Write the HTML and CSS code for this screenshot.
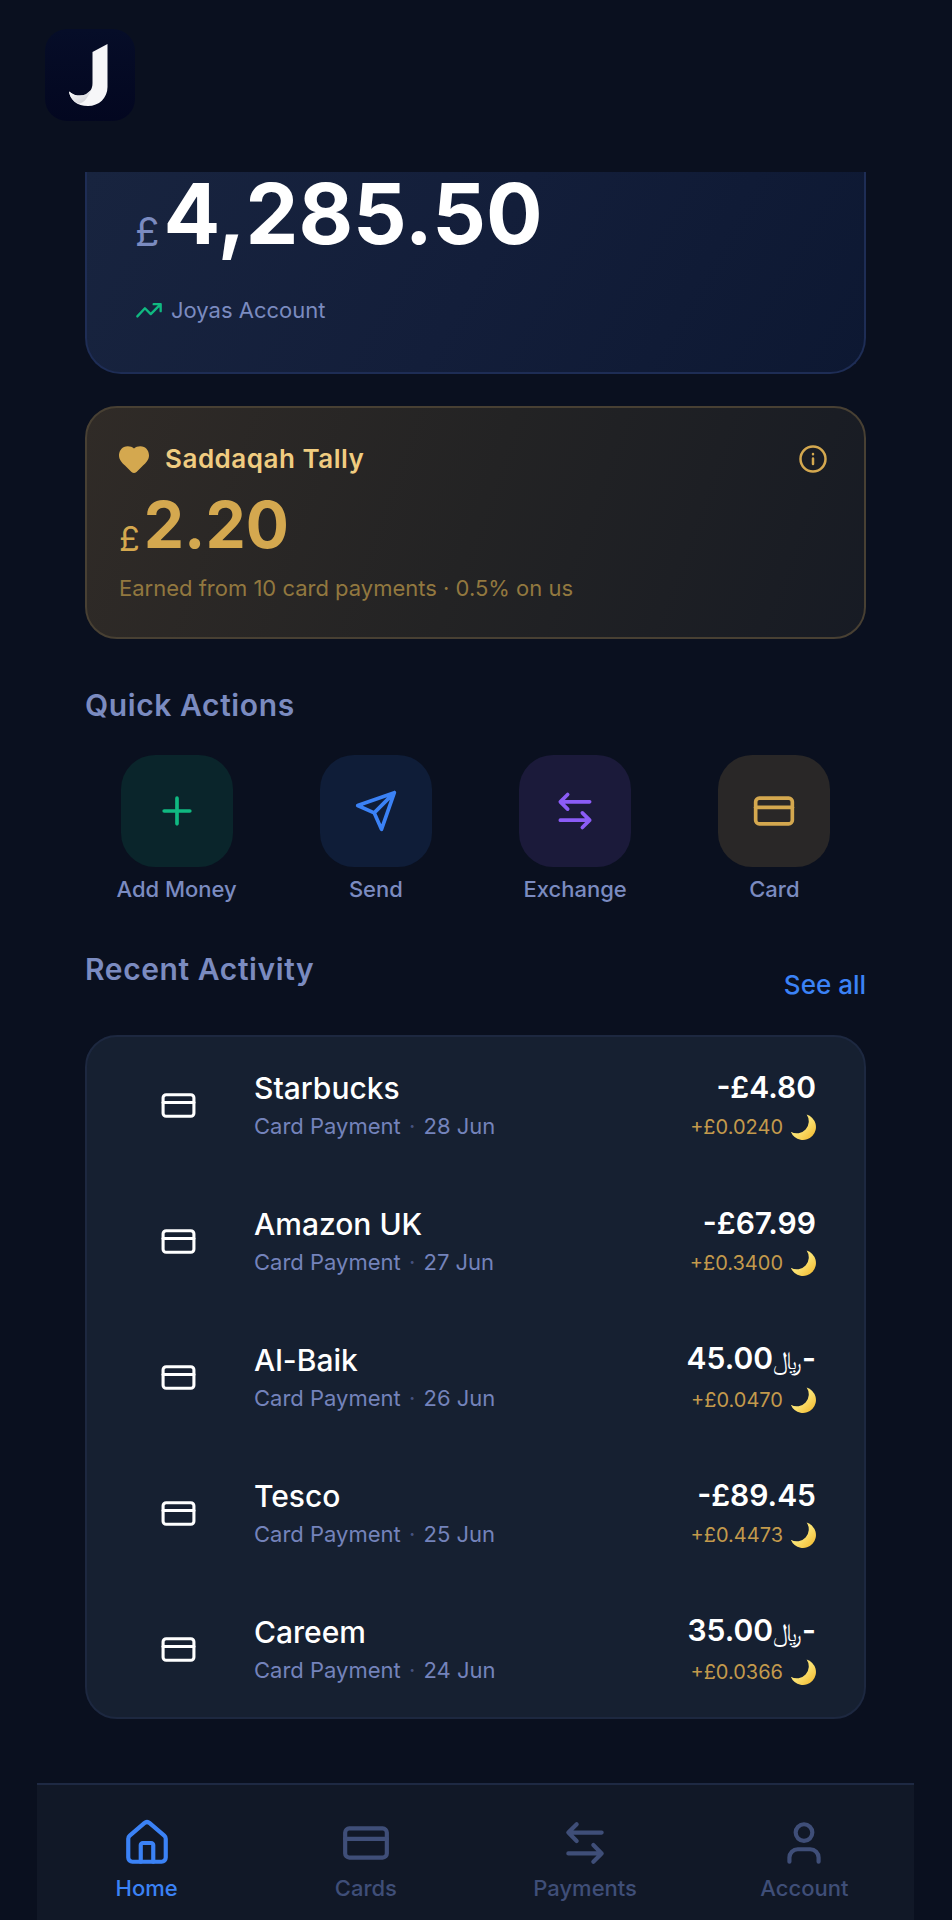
FILE: index.html
```html
<!DOCTYPE html>
<html lang="en">
<head>
  <meta charset="UTF-8" />
  <meta name="viewport" content="width=device-width, initial-scale=1" />
  <title>Joyas - Home</title>
  <link rel="stylesheet" href="styles.css">
</head>
<body>

  <!-- Shared icons -->
  <svg class="sprite" aria-hidden="true">
    <linearGradient id="moon-fill" x1="0" y1="0" x2="1" y2="1">
      <stop offset=".5" stop-color="#fbe272"/><stop offset=".9" stop-color="#f3bd35"/>
    </linearGradient>
    <symbol id="i-card" viewBox="0 0 24 24"><rect x="2" y="5" width="20" height="14" rx="2"/><path d="M2 10h20"/></symbol>
    <symbol id="i-swap" viewBox="0 0 24 24"><path d="M8 3 4 7l4 4M4 7h16M16 21l4-4-4-4M20 17H4"/></symbol>
    <symbol id="i-moon" viewBox="0 0 25 25"><path d="M16 .5A12.500 12.500 0 1 1 .8 17A11.500 11.500 0 0 0 16 .5Z" fill="url(#moon-fill)"/></symbol>
  </svg>

  <header class="top">
    <svg class="logo" viewBox="0 0 90 92" role="img" aria-label="Joyas">
      <defs>
        <linearGradient id="logo-bg" x1="0" y1="0" x2="0" y2="1">
          <stop offset="0" stop-color="#060d28"/><stop offset="1" stop-color="#030720"/>
        </linearGradient>
        <linearGradient id="fold" x1="0" y1="0" x2="1" y2="1">
          <stop offset="0" stop-color="#fff"/><stop offset="1" stop-color="#c9cad0"/>
        </linearGradient>
      </defs>
      <rect width="90" height="92" rx="22" fill="url(#logo-bg)"/>
      <path d="M47.500 23 62.500 15V58C62.500 69 54 77 43 77C32 77 25 71 24 62.500C29 67 36 67.500 40.500 65.500C45 63.500 47.500 60 47.500 54Z" fill="#f6f6f8"/>
      <path d="M24 62.500C29 67 36 67.500 40.500 65.500L46 61C43 68 40 73.500 34 74.500C28 72.500 25 68 24 62.500Z" fill="url(#fold)"/>
    </svg>
  </header>

  <main class="content">
    <section class="card balance">
      <div class="amount"><span class="cur">£</span><strong>4,285.50</strong></div>
      <div class="account">
        <svg class="icon trend" viewBox="0 0 24 24"><path d="m2 17.500 6.500-7 5 5L22 7M16 7h6v6"/></svg>
        <span>Joyas Account</span>
      </div>
    </section>

    <section class="card tally">
      <div class="tally-head">
        <svg class="heart" viewBox="0 0 30 27"><path d="M15 2.500C12.500 0 8-.500 5 1C1 3 0 7 0 9.500C0 13.500 3 17 6 19.500L12.500 26Q15 28 17.500 26L24 19.500C27 17 30 13.500 30 9.500C30 7 29 3 25 1C22-.500 17.500 0 15 2.500Z"/></svg>
        <h2>Saddaqah Tally</h2>
        <button class="info" aria-label="About the tally">
          <svg class="icon" viewBox="0 0 24 24"><circle cx="12" cy="12" r="10"/><path d="M12 11.500V16M12 7.900v.2"/></svg>
        </button>
      </div>
      <div class="amount"><span class="cur">£</span><strong>2.20</strong></div>
      <p>Earned from 10 card payments · 0.5% on us</p>
    </section>

    <h2 class="section-title">Quick Actions</h2>
    <div class="actions">
      <button class="action green">
        <span class="tile"><svg class="icon" viewBox="0 0 24 24"><path d="M5 12h14M12 5v14"/></svg></span>
        Add Money
      </button>
      <button class="action blue">
        <span class="tile"><svg class="icon" viewBox="0 0 24 24"><path d="M22 2 11 13M22 2l-7 20-4-9-9-4Z"/></svg></span>
        Send
      </button>
      <button class="action purple">
        <span class="tile"><svg class="icon"><use href="#i-swap"/></svg></span>
        Exchange
      </button>
      <button class="action gold">
        <span class="tile"><svg class="icon"><use href="#i-card"/></svg></span>
        Card
      </button>
    </div>

    <div class="activity-head">
      <h2 class="section-title">Recent Activity</h2>
      <a href="#all">See all</a>
    </div>
    <ul class="card activity">
      <li>
        <svg class="icon"><use href="#i-card"/></svg>
        <div class="who"><b>Starbucks</b><span>Card Payment <i>·</i> 28 Jun</span></div>
        <div class="sum"><b>-£4.80</b><span>+£0.0240 <svg class="moon"><use href="#i-moon"/></svg></span></div>
      </li>
      <li>
        <svg class="icon"><use href="#i-card"/></svg>
        <div class="who"><b>Amazon UK</b><span>Card Payment <i>·</i> 27 Jun</span></div>
        <div class="sum"><b>-£67.99</b><span>+£0.3400 <svg class="moon"><use href="#i-moon"/></svg></span></div>
      </li>
      <li>
        <svg class="icon"><use href="#i-card"/></svg>
        <div class="who"><b>Al-Baik</b><span>Card Payment <i>·</i> 26 Jun</span></div>
        <div class="sum"><b dir="rtl">-<span class="riyal">﷼</span>45.00</b><span>+£0.0470 <svg class="moon"><use href="#i-moon"/></svg></span></div>
      </li>
      <li>
        <svg class="icon"><use href="#i-card"/></svg>
        <div class="who"><b>Tesco</b><span>Card Payment <i>·</i> 25 Jun</span></div>
        <div class="sum"><b>-£89.45</b><span>+£0.4473 <svg class="moon"><use href="#i-moon"/></svg></span></div>
      </li>
      <li>
        <svg class="icon"><use href="#i-card"/></svg>
        <div class="who"><b>Careem</b><span>Card Payment <i>·</i> 24 Jun</span></div>
        <div class="sum"><b dir="rtl">-<span class="riyal">﷼</span>35.00</b><span>+£0.0366 <svg class="moon"><use href="#i-moon"/></svg></span></div>
      </li>
    </ul>
  </main>

  <nav class="tabs">
    <a href="#home" class="active">
      <svg class="icon" viewBox="0 0 24 24"><path d="M15 21v-8a1 1 0 0 0-1-1h-4a1 1 0 0 0-1 1v8"/><path d="M3 10a2 2 0 0 1 .709-1.528l7-5.999a2 2 0 0 1 2.582 0l7 5.999A2 2 0 0 1 21 10v9a2 2 0 0 1-2 2H5a2 2 0 0 1-2-2z"/></svg>
      Home
    </a>
    <a href="#cards">
      <svg class="icon"><use href="#i-card"/></svg>
      Cards
    </a>
    <a href="#payments">
      <svg class="icon"><use href="#i-swap"/></svg>
      Payments
    </a>
    <a href="#account">
      <svg class="icon" viewBox="0 0 24 24"><path d="M19 21v-2a4 4 0 0 0-4-4H9a4 4 0 0 0-4 4v2"/><circle cx="12" cy="7" r="4"/></svg>
      Account
    </a>
  </nav>

</body>
</html>
```

FILE: styles.css
```css
* {
  box-sizing: border-box;
}
body {
  margin: 0;
  min-height: 100vh;
  display: flex;
  flex-direction: column;
  font-family: Inter, 'DejaVu Sans', sans-serif;
  font-size: 22px;
  line-height: 28px;
  background: #0a101f;
  color: #fff;
}
h2, p, ul {
  margin: 0;
  padding: 0;
}
button {
  font: inherit;
  background: none;
  border: none;
  padding: 0;
  cursor: pointer;
}
a {
  text-decoration: none;
}
.sprite {
  position: absolute;
  width: 0;
  height: 0;
}
.icon {
  fill: none;
  stroke: currentColor;
  stroke-width: 2;
  stroke-linecap: round;
  stroke-linejoin: round;
  flex-shrink: 0;
}

/* Header */
.top {
  padding: 29px 45px 51px;
}
.logo {
  display: block;
  width: 90px;
  height: 92px;
}

.content {
  flex: 1;
  padding: 0 86px 64px 85px;
}
.card {
  border: 2px solid;
  border-radius: 32px;
}
.amount {
  display: flex;
  align-items: flex-end;
  gap: 4px;
}

/* Balance card, scrolled under the header */
.balance {
  height: 202px;
  padding: 0 48px;
  border-color: #1e2d55;
  border-top: none;
  border-radius: 0 0 36px 36px;
  background: linear-gradient(120deg, #18243f, #131e3a 50%, #0d1832);
}
.balance .cur {
  font-size: 40px;
  line-height: 48px;
  color: #7b8bc0;
}
.balance strong {
  font-size: 84px;
  line-height: 84px;
}
.account {
  display: flex;
  align-items: center;
  gap: 8px;
  margin-top: 40px;
  color: #7b8bc0;
}
.trend {
  width: 28px;
  height: 28px;
  color: #10b981;
}

/* Saddaqah */
.tally {
  margin-top: 32px;
  padding: 32px 36px 35px 32px;
  border-color: #484033;
  background: linear-gradient(110deg, #302b27, #232324 50%, #171b24);
  color: #d4a84f;
}
.tally-head {
  display: flex;
  align-items: center;
  gap: 16px;
  height: 38px;
}
.tally-head h2 {
  flex: 1;
  font-size: 26px;
  font-weight: 600;
  letter-spacing: 0.02em;
  color: #f0cc80;
}
.heart {
  width: 30px;
  height: 27px;
  fill: currentColor;
}
.info {
  display: flex;
  color: inherit;
}
.info .icon {
  width: 30px;
  height: 30px;
}
.tally .amount {
  margin-top: 6px;
}
.tally .cur {
  font-size: 34px;
  line-height: 54px;
}
.tally strong {
  font-size: 64px;
  line-height: 82px;
}
.tally p {
  margin-top: 8px;
  color: #92783f;
}

/* Quick actions */
.section-title {
  font-size: 30px;
  line-height: 36px;
  font-weight: 600;
  letter-spacing: 0.02em;
  color: #7b8bc0;
}
.content > .section-title {
  margin-top: 48px;
}
.actions {
  display: grid;
  grid-template-columns: repeat(4, 1fr);
  gap: 16px;
  margin-top: 32px;
}
.action {
  display: flex;
  flex-direction: column;
  align-items: center;
  gap: 8px;
  color: #7b8bc0;
  font-weight: 500;
}
.tile {
  display: grid;
  place-items: center;
  width: 112px;
  height: 112px;
  border-radius: 34px;
}
.tile .icon {
  width: 44px;
  height: 44px;
}
.green .tile { background: #0a252b; color: #10b981; }
.blue .tile { background: #0f1d38; color: #3b82f6; }
.purple .tile { background: #1b1a3a; color: #8b5cf6; }
.gold .tile { background: #292727; color: #d4a84f; }

/* Recent activity */
.activity-head {
  display: flex;
  justify-content: space-between;
  margin-top: 48px;
}
.activity-head a {
  margin-top: 16px;
  font-size: 26px;
  line-height: 36px;
  font-weight: 500;
  color: #3b82f6;
}
.activity {
  list-style: none;
  margin-top: 32px;
  border-color: #1d2840;
  background: #162031;
}
.activity li {
  display: flex;
  align-items: center;
  height: 136px;
  padding: 0 48px 0 73px;
}
.activity .icon {
  width: 37px;
  height: 37px;
}
.who, .sum {
  display: flex;
  flex-direction: column;
}
.who {
  flex: 1;
  margin-left: 57px;
  gap: 6px;
}
.who b, .sum b {
  font-size: 30px;
  line-height: 36px;
  font-weight: 500;
}
.who span {
  color: #7483bb;
}
.who i {
  margin: 0 2px;
  font-style: normal;
  color: #46527e;
}
.sum {
  align-items: flex-end;
  gap: 8px;
}
.sum b {
  font-weight: 600;
}
.riyal {
  font-size: 26px;
  font-weight: 400;
}
.sum > span {
  display: flex;
  align-items: center;
  gap: 7px;
  font-size: 20px;
  color: #c39a4c;
}
.moon {
  width: 26px;
  height: 26px;
}

/* Bottom tabs */
.tabs {
  display: grid;
  grid-template-columns: repeat(4, 1fr);
  margin: 0 38px 0 37px;
  padding: 33px 0 19px;
  border-top: 2px solid #1e2943;
  background: #111827;
}
.tabs a {
  display: flex;
  flex-direction: column;
  align-items: center;
  gap: 6px;
  font-weight: 500;
  color: #3f4e78;
}
.tabs a.active {
  color: #3b82f6;
}
.tabs .icon {
  width: 50px;
  height: 50px;
}
```
